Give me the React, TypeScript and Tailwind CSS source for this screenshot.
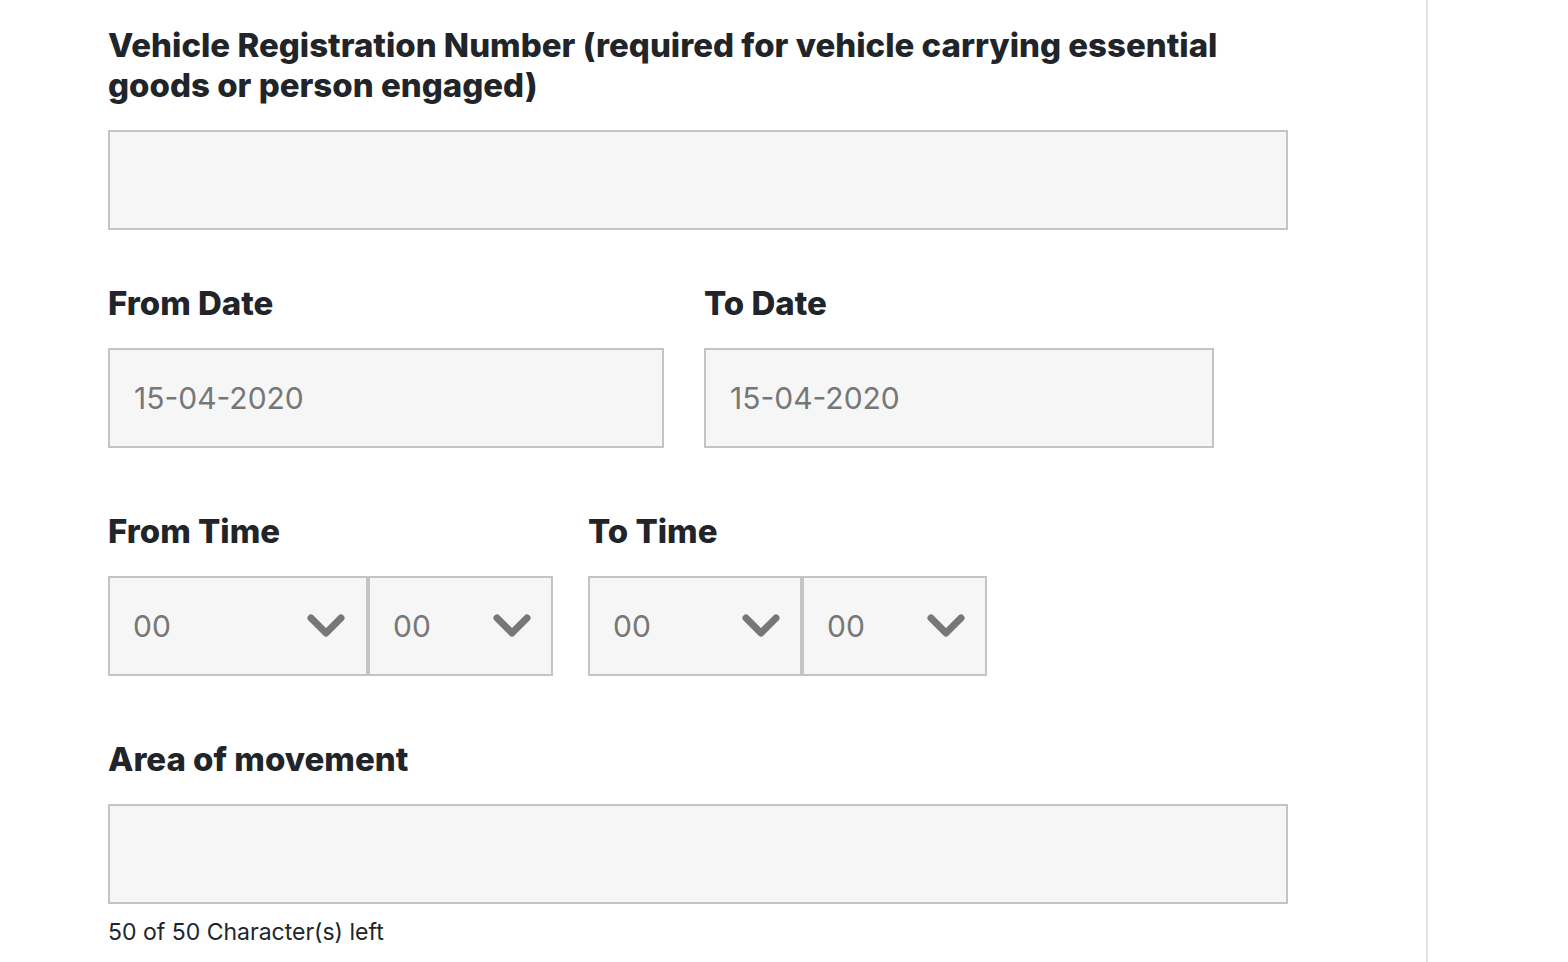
import React from 'react';

const font = { fontFamily: 'Inter, "Liberation Sans", sans-serif' };

function Chevron() {
  return (
    <svg width="38" height="26" viewBox="0 0 38 26" className="shrink-0">
      <polyline
        points="4,5 19,20 34,5"
        fill="none"
        stroke="#777777"
        strokeWidth="7"
        strokeLinecap="round"
        strokeLinejoin="round"
      />
    </svg>
  );
}

function Label({ children }: { children: React.ReactNode }) {
  return (
    <div className="text-[33px] leading-[40px] font-extrabold tracking-[0px] text-[#212529]">
      {children}
    </div>
  );
}

function Select({ width, pr }: { width: string; pr: string }) {
  return (
    <div
      className={`${width} ${pr} h-[100px] border-2 border-[#c4c4c4] bg-[#f6f6f6] flex items-center justify-between pl-[23px]`}
    >
      <span className="text-[30px] text-[#777777]">00</span>
      <Chevron />
    </div>
  );
}

export default function App() {
  return (
    <div className="flex min-h-[962px] bg-white" style={font}>
      <div className="w-[1426px] pl-[108px] pt-[25px]">
        <Label>
          Vehicle Registration Number (required for vehicle carrying essential
          <br />
          goods or person engaged)
        </Label>
        <div className="mt-[25px] w-[1180px] h-[100px] border-2 border-[#c4c4c4] bg-[#f6f6f6]" />

        <div className="mt-[53px] flex gap-[40px]">
          <div>
            <Label>From Date</Label>
            <div className="mt-[25px] w-[556px] h-[100px] border-2 border-[#c4c4c4] bg-[#f6f6f6] flex items-center pl-[24px] text-[30px] text-[#777777]">
              15-04-2020
            </div>
          </div>
          <div>
            <Label>To Date</Label>
            <div className="mt-[25px] w-[510px] h-[100px] border-2 border-[#c4c4c4] bg-[#f6f6f6] flex items-center pl-[24px] text-[30px] text-[#777777]">
              15-04-2020
            </div>
          </div>
        </div>

        <div className="mt-[63px] flex gap-[35px]">
          <div>
            <Label>From Time</Label>
            <div className="mt-[25px] flex">
              <Select width="w-[260px]" pr="pr-[21px]" />
              <Select width="w-[185px]" pr="pr-[20px]" />
            </div>
          </div>
          <div>
            <Label>To Time</Label>
            <div className="mt-[25px] flex">
              <Select width="w-[214px]" pr="pr-[20px]" />
              <Select width="w-[185px]" pr="pr-[20px]" />
            </div>
          </div>
        </div>

        <div className="mt-[63px]">
          <Label>Area of movement</Label>
          <div className="mt-[25px] w-[1180px] h-[100px] border-2 border-[#c4c4c4] bg-[#f6f6f6]" />
          <div className="mt-[14px] text-[23px] leading-[28px] text-[#212529]">
            50 of 50 Character(s) left
          </div>
        </div>
      </div>
      <div className="w-[2px] bg-[#e2e2e2]" />
    </div>
  );
}
